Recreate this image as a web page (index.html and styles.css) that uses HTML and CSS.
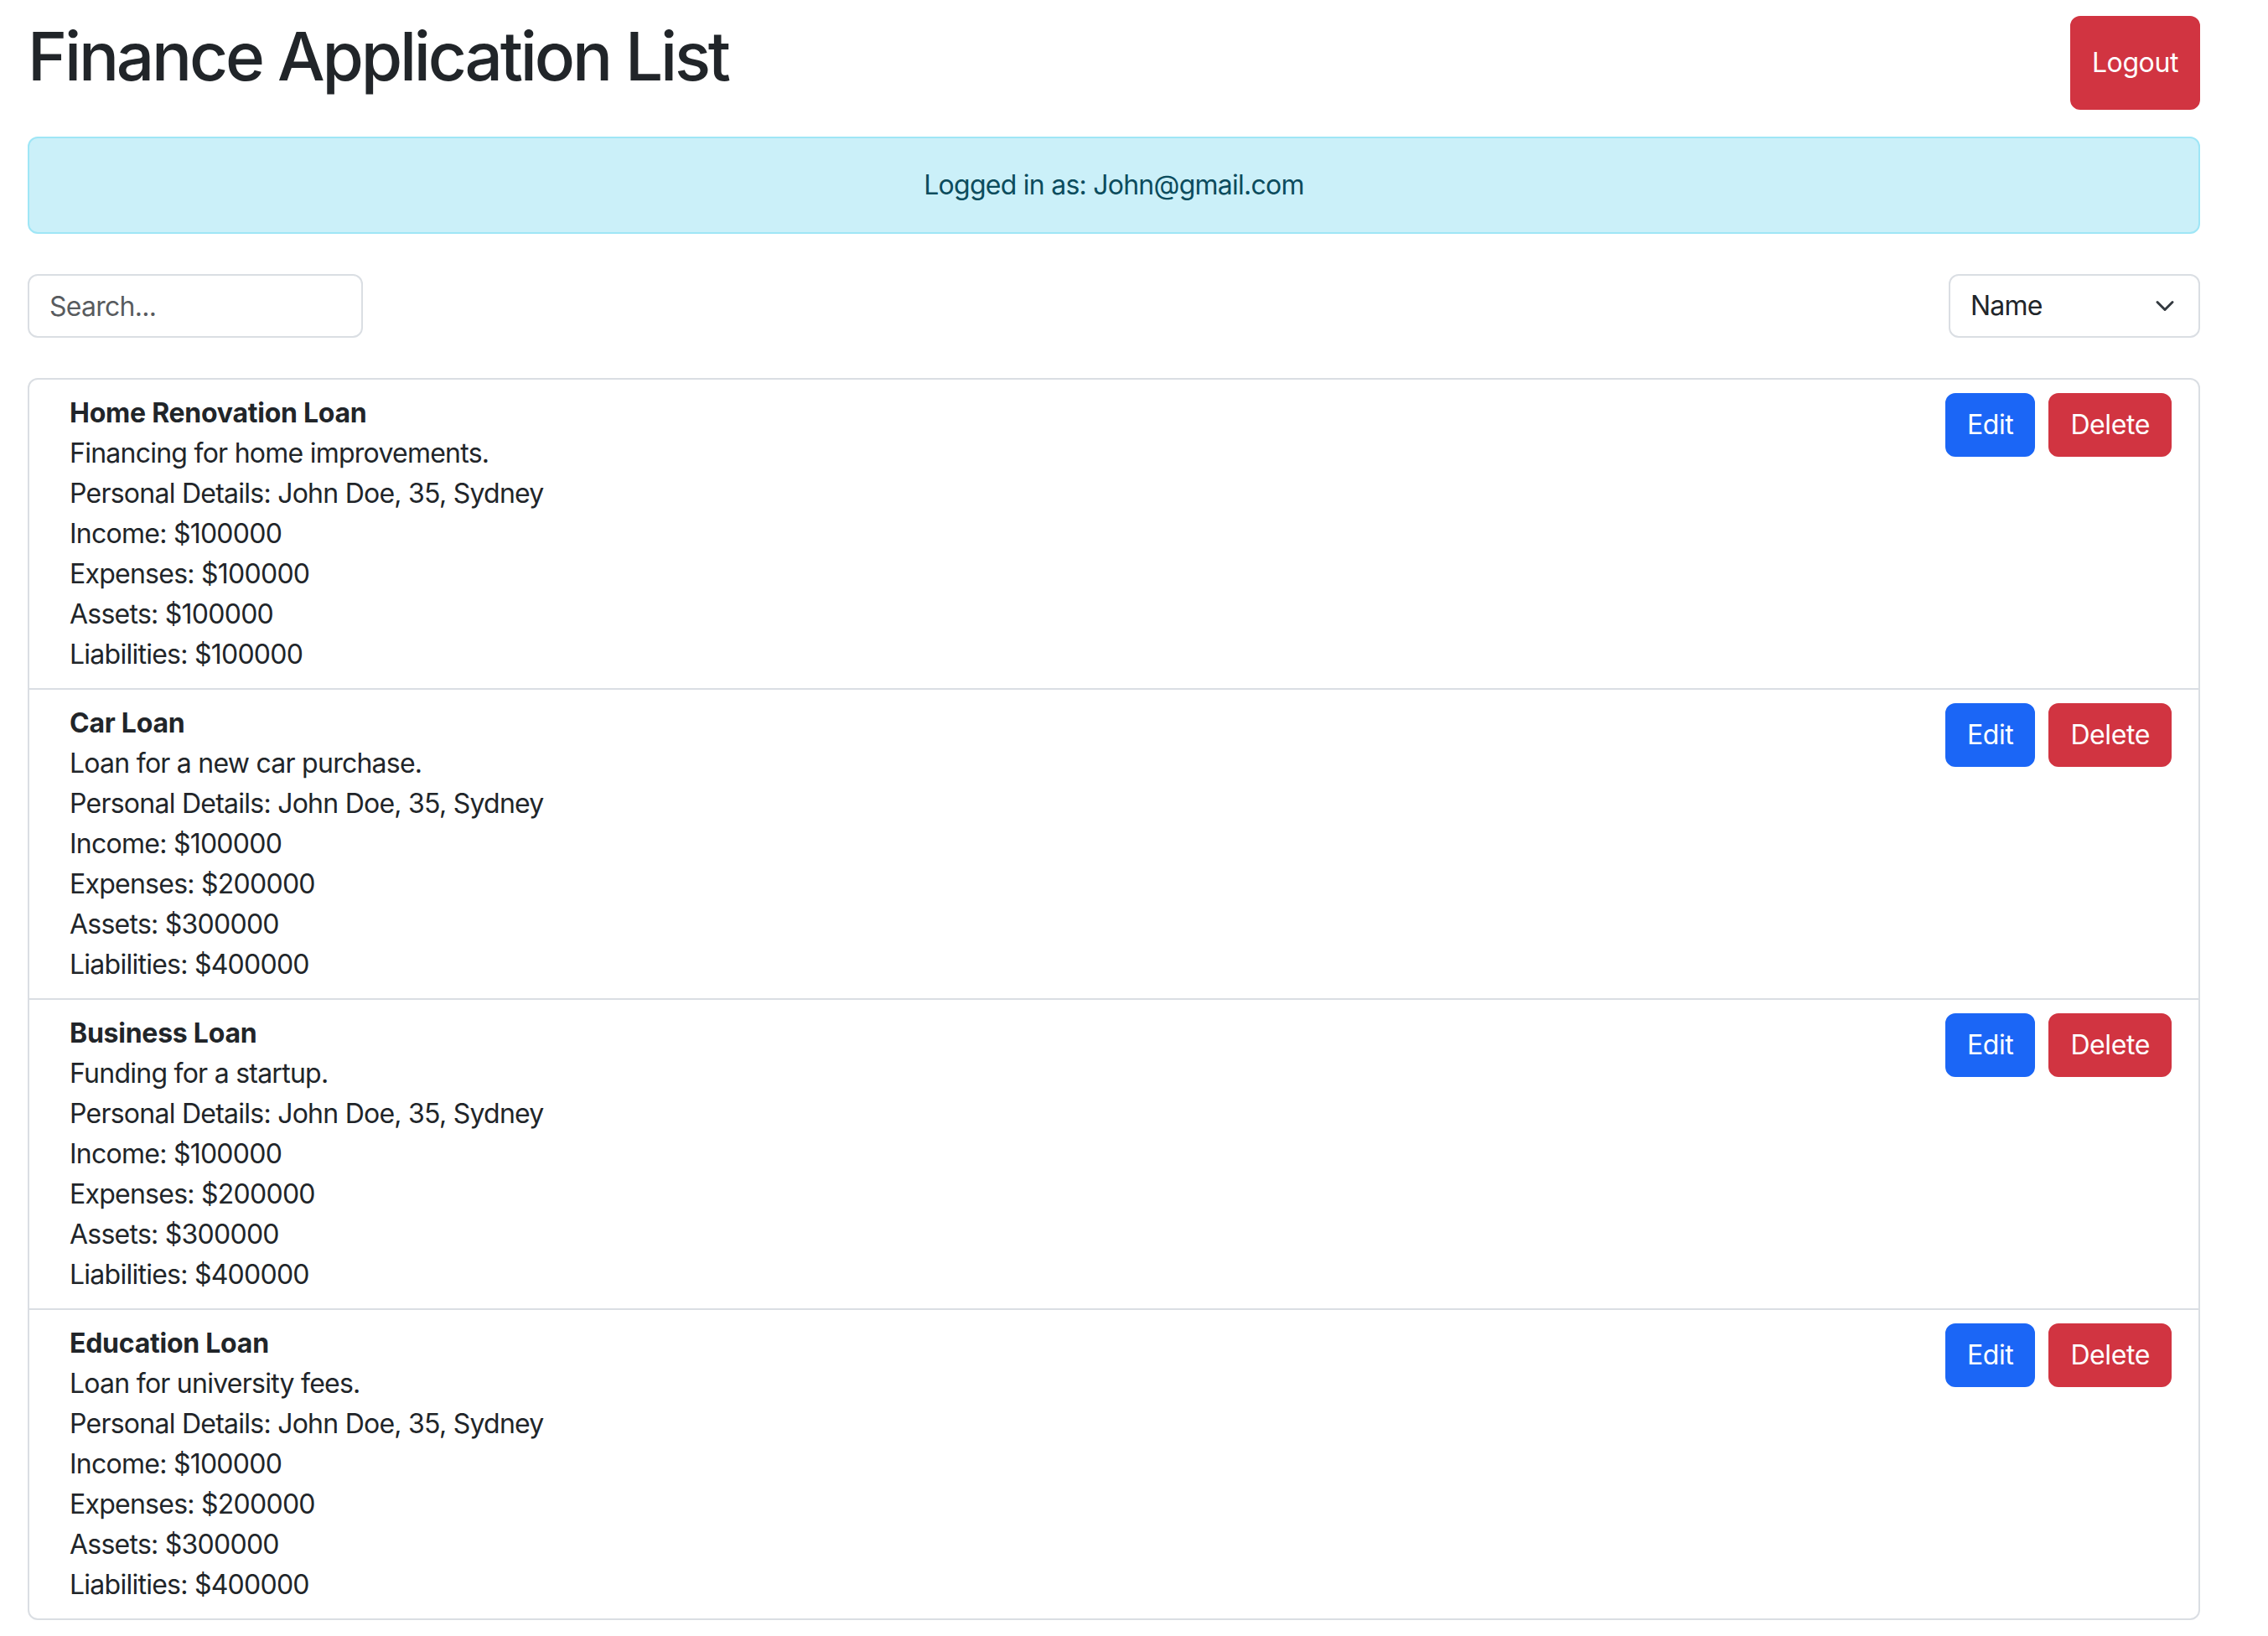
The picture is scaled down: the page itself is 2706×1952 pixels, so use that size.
FILE: index.html
```html
<!DOCTYPE html>
<html lang="en">
<head>
<meta charset="utf-8">
<title>Finance Application List</title>
<link rel="stylesheet" href="styles.css">
</head>
<body>
<div class="page">
  <header class="header">
    <h1 class="title">Finance Application List</h1>
    <button class="btn btn-danger">Logout</button>
  </header>

  <div class="alert">Logged in as: John@gmail.com</div>

  <div class="toolbar">
    <input class="search" type="text" placeholder="Search...">
    <div class="select-wrap">
      <select class="sort">
        <option>Name</option>
      </select>
      <svg class="chevron" viewBox="0 0 16 16" width="32" height="24" aria-hidden="true"><path fill="none" stroke="#343a40" stroke-linecap="round" stroke-linejoin="round" stroke-width="2" d="m2 5 6 6 6-6"/></svg>
    </div>
  </div>

  <ul class="list">
    <li class="item">
      <div class="info">
        <div class="name">Home Renovation Loan</div>
        <div>Financing for home improvements.</div>
        <div>Personal Details: John Doe, 35, Sydney</div>
        <div>Income: $100000</div>
        <div>Expenses: $100000</div>
        <div>Assets: $100000</div>
        <div>Liabilities: $100000</div>
      </div>
      <div class="actions">
        <button class="btn btn-primary">Edit</button>
        <button class="btn btn-danger">Delete</button>
      </div>
    </li>
    <li class="item">
      <div class="info">
        <div class="name">Car Loan</div>
        <div>Loan for a new car purchase.</div>
        <div>Personal Details: John Doe, 35, Sydney</div>
        <div>Income: $100000</div>
        <div>Expenses: $200000</div>
        <div>Assets: $300000</div>
        <div>Liabilities: $400000</div>
      </div>
      <div class="actions">
        <button class="btn btn-primary">Edit</button>
        <button class="btn btn-danger">Delete</button>
      </div>
    </li>
    <li class="item">
      <div class="info">
        <div class="name">Business Loan</div>
        <div>Funding for a startup.</div>
        <div>Personal Details: John Doe, 35, Sydney</div>
        <div>Income: $100000</div>
        <div>Expenses: $200000</div>
        <div>Assets: $300000</div>
        <div>Liabilities: $400000</div>
      </div>
      <div class="actions">
        <button class="btn btn-primary">Edit</button>
        <button class="btn btn-danger">Delete</button>
      </div>
    </li>
    <li class="item">
      <div class="info">
        <div class="name">Education Loan</div>
        <div>Loan for university fees.</div>
        <div>Personal Details: John Doe, 35, Sydney</div>
        <div>Income: $100000</div>
        <div>Expenses: $200000</div>
        <div>Assets: $300000</div>
        <div>Liabilities: $400000</div>
      </div>
      <div class="actions">
        <button class="btn btn-primary">Edit</button>
        <button class="btn btn-danger">Delete</button>
      </div>
    </li>
  </ul>
</div>
</body>
</html>
```

FILE: styles.css
```css
* { box-sizing: border-box; }

html, body {
  margin: 0;
  padding: 0;
  background: #ffffff;
}

body {
  font-family: Inter, "Noto Sans", "Liberation Sans", sans-serif;
  font-size: 32px;
  line-height: 48px;
  color: #212529;
  letter-spacing: -0.75px;
}

.page {
  padding: 19px 81px 0 33px;
}

.header {
  display: flex;
  justify-content: space-between;
  align-items: stretch;
}

.title {
  margin: 0 0 16px 0;
  font-size: 80px;
  line-height: 96px;
  font-weight: 500;
  color: #212529;
  letter-spacing: -3.2px;
}

.btn {
  font-family: inherit;
  font-size: 32px;
  line-height: 48px;
  font-weight: 400;
  letter-spacing: -0.4px;
  color: #ffffff;
  padding: 12px 24px;
  border: 2px solid transparent;
  border-radius: 12px;
  cursor: pointer;
}

.btn-primary {
  background: #1b66f6;
  border-color: #1b66f6;
}

.btn-danger {
  background: #d13441;
  border-color: #d13441;
}

.alert {
  margin-top: 32px;
  padding: 32px;
  border: 2px solid #9fe6f6;
  border-radius: 12px;
  background: #cbf0f9;
  color: #0b4c5d;
  text-align: center;
}

.toolbar {
  margin-top: 48px;
  display: flex;
  justify-content: space-between;
  align-items: center;
}

.search {
  width: 400px;
  height: 76px;
  padding: 12px 24px;
  font-family: inherit;
  font-size: 32px;
  line-height: 48px;
  letter-spacing: -0.75px;
  color: #212529;
  border: 2px solid #dadee3;
  border-radius: 12px;
  background: #ffffff;
  outline: none;
}

.search::placeholder {
  color: rgba(33, 37, 41, 0.75);
}

.select-wrap {
  position: relative;
  width: 300px;
}

.sort {
  display: block;
  width: 100%;
  height: 76px;
  padding: 12px 72px 12px 24px;
  font-family: inherit;
  font-size: 32px;
  line-height: 48px;
  letter-spacing: -0.75px;
  color: #212529;
  border: 2px solid #dadee3;
  border-radius: 12px;
  background: #ffffff;
  -webkit-appearance: none;
  appearance: none;
  outline: none;
}

.chevron {
  position: absolute;
  right: 26px;
  top: 26px;
  width: 32px;
  height: 24px;
  pointer-events: none;
}

.list {
  list-style: none;
  margin: 48px 0 0 0;
  padding: 0;
  border: 2px solid #dadee3;
  border-radius: 12px;
}

.item {
  display: flex;
  justify-content: space-between;
  align-items: flex-start;
  padding: 16px 32px;
  border-top: 2px solid #dadee3;
}

.item:first-child {
  border-top: 0;
}

.info {
  margin-left: 16px;
}

.name {
  font-weight: 700;
  letter-spacing: -0.25px;
}

.actions {
  display: flex;
  gap: 16px;
}
```
